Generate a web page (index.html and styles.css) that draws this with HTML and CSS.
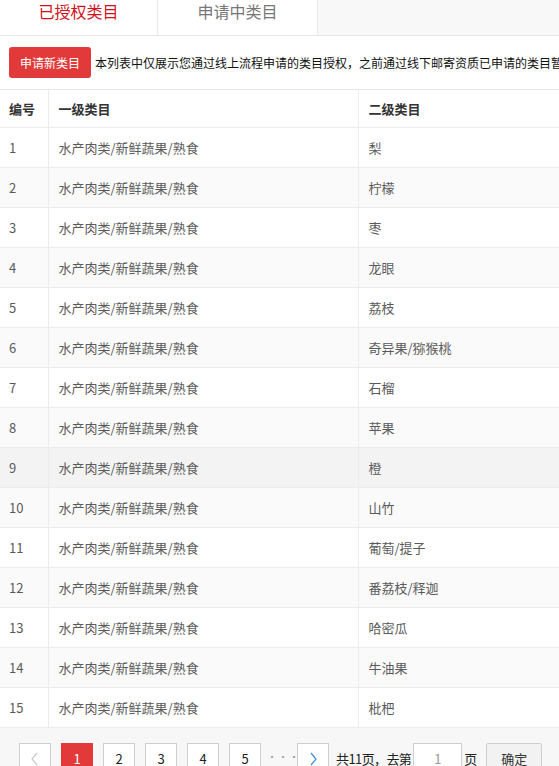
FILE: index.html
```html
<!DOCTYPE html>
<html lang="zh-CN">
<head>
<meta charset="utf-8">
<link rel="stylesheet" href="styles.css">
</head>
<body>
<div class="page">
  <div class="tabs">
    <div class="tab active">已授权类目</div>
    <div class="tab">申请中类目</div>
    <div class="tab-fill"></div>
  </div>
  <div class="toolbar">
    <button class="btn-primary">申请新类目</button>
    <span class="note">本列表中仅展示您通过线上流程申请的类目授权，之前通过线下邮寄资质已申请的类目暂不在此展示</span>
  </div>
  <table class="grid">
    <thead>
      <tr><th class="c1">编号</th><th class="c2">一级类目</th><th class="c3">二级类目</th></tr>
    </thead>
    <tbody>
      <tr><td>1</td><td>水产肉类/新鲜蔬果/熟食</td><td>梨</td></tr>
      <tr><td>2</td><td>水产肉类/新鲜蔬果/熟食</td><td>柠檬</td></tr>
      <tr><td>3</td><td>水产肉类/新鲜蔬果/熟食</td><td>枣</td></tr>
      <tr><td>4</td><td>水产肉类/新鲜蔬果/熟食</td><td>龙眼</td></tr>
      <tr><td>5</td><td>水产肉类/新鲜蔬果/熟食</td><td>荔枝</td></tr>
      <tr><td>6</td><td>水产肉类/新鲜蔬果/熟食</td><td>奇异果/猕猴桃</td></tr>
      <tr><td>7</td><td>水产肉类/新鲜蔬果/熟食</td><td>石榴</td></tr>
      <tr><td>8</td><td>水产肉类/新鲜蔬果/熟食</td><td>苹果</td></tr>
      <tr class="hover"><td>9</td><td>水产肉类/新鲜蔬果/熟食</td><td>橙</td></tr>
      <tr><td>10</td><td>水产肉类/新鲜蔬果/熟食</td><td>山竹</td></tr>
      <tr><td>11</td><td>水产肉类/新鲜蔬果/熟食</td><td>葡萄/提子</td></tr>
      <tr><td>12</td><td>水产肉类/新鲜蔬果/熟食</td><td>番荔枝/释迦</td></tr>
      <tr><td>13</td><td>水产肉类/新鲜蔬果/熟食</td><td>哈密瓜</td></tr>
      <tr><td>14</td><td>水产肉类/新鲜蔬果/熟食</td><td>牛油果</td></tr>
      <tr><td>15</td><td>水产肉类/新鲜蔬果/熟食</td><td>枇杷</td></tr>
    </tbody>
  </table>
  <div class="pager">
    <span class="pg disabled"><svg width="10" height="14" viewBox="0 0 10 14"><path d="M7 1 L2 7 L7 13" fill="none" stroke="#c8c8c8" stroke-width="1.2"/></svg></span>
    <span class="pg current">1</span>
    <span class="pg">2</span>
    <span class="pg">3</span>
    <span class="pg">4</span>
    <span class="pg">5</span>
    <span class="dots">···</span>
    <span class="pg"><svg width="10" height="14" viewBox="0 0 10 14"><path d="M3 1 L8 7 L3 13" fill="none" stroke="#3a8ee6" stroke-width="1.2"/></svg></span>
    <span class="total">共11页，去第</span>
    <input class="goto" type="text" value="1">
    <span class="unit">页</span>
    <button class="ok">确定</button>
  </div>
</div>
</body>
</html>
```
FILE: styles.css
```css
* { box-sizing: border-box; }
html, body { margin: 0; padding: 0; background: #fff; }
body {
  font-family: "Noto Sans CJK SC", "Microsoft YaHei", "Liberation Sans", sans-serif;
  width: 559px;
  overflow: hidden;
}
.page { width: 559px; }
.tabs {
  display: flex;
  height: 36px;
  border-bottom: 1px solid #e6e6e6;
  background: #f8f8f8;
}
.tab {
  width: 157px;
  background: #fff;
  font-size: 16px;
  line-height: 22px;
  text-align: center;
  color: #777;
}
.tab + .tab {
  width: 161px;
  border-left: 1px solid #e8e8e8;
  border-right: 1px solid #e8e8e8;
}
.tab.active { color: #d0101b; }
.tab-fill { flex: 1; }
.toolbar {
  display: flex;
  align-items: center;
  height: 54px;
  padding-left: 9px;
  border-bottom: 1px solid #e8e8e8;
  white-space: nowrap;
  overflow: hidden;
}
.btn-primary {
  flex: none;
  width: 82px;
  height: 31px;
  border: none;
  border-radius: 3px;
  background: #e23a3a;
  color: #fff;
  font-family: inherit;
  font-size: 12px;
  padding: 0;
  margin-right: 4px;
}
.note { font-size: 12px; color: #111; }
.grid {
  width: 559px;
  border-collapse: collapse;
  table-layout: fixed;
  font-size: 13px;
}
.grid th, .grid td {
  height: 40px;
  padding: 0 10px 0 9px;
  text-align: left;
  border: 1px solid #ececec;
  border-top: none;
  color: #5a5a5a;
  white-space: nowrap;
}
.grid th:first-child, .grid td:first-child { border-left: none; }
.grid th:nth-child(2), .grid td:nth-child(2) { padding-left: 10px; }
.grid th:nth-child(3), .grid td:nth-child(3) { padding-left: 10px; }
.grid th {
  height: 37px;
  color: #333;
  font-weight: bold;
}
.c1 { width: 48px; }
.c2 { width: 310px; }
.c3 { width: 201px; }
.grid tbody tr:nth-child(even) { background: #fafafa; }
.grid tbody tr.hover { background: #f3f3f3; }
.pager {
  display: flex;
  align-items: flex-start;
  background: #f7f7f7;
  height: 40px;
  padding: 15px 0 0 19px;
  font-size: 13px;
  color: #222;
}
.pg {
  display: flex;
  align-items: center;
  justify-content: center;
  width: 32px;
  height: 32px;
  margin-right: 10px;
  border: 1px solid #cfcfcf;
  background: #fff;
  color: #222;
  flex: none;
}
.pg.current { background: #e23a3a; border-color: #e23a3a; color: #fff; }
.dots {
  width: 26px;
  margin-left: -4px;
  margin-right: 4px;
  height: 32px;
  line-height: 28px;
  color: #999;
  letter-spacing: 1px;
  font-size: 10px;
}
.total { line-height: 32px; margin-left: -3px; margin-right: 0; letter-spacing: -0.6px; }
.goto {
  width: 49px;
  height: 32px;
  border: 1px solid #cfcfcf;
  background: #fff;
  text-align: center;
  font-family: inherit;
  font-size: 13px;
  color: #999;
  padding: 0;
  margin: 0 0 0 2px;
}
.unit { line-height: 32px; margin: 0 9px 0 2px; }
.ok {
  width: 56px;
  height: 32px;
  border: 1px solid #cfcfcf;
  border-radius: 2px;
  background: #f2f2f2;
  font-family: inherit;
  font-size: 13px;
  color: #333;
  padding: 0;
}
```
